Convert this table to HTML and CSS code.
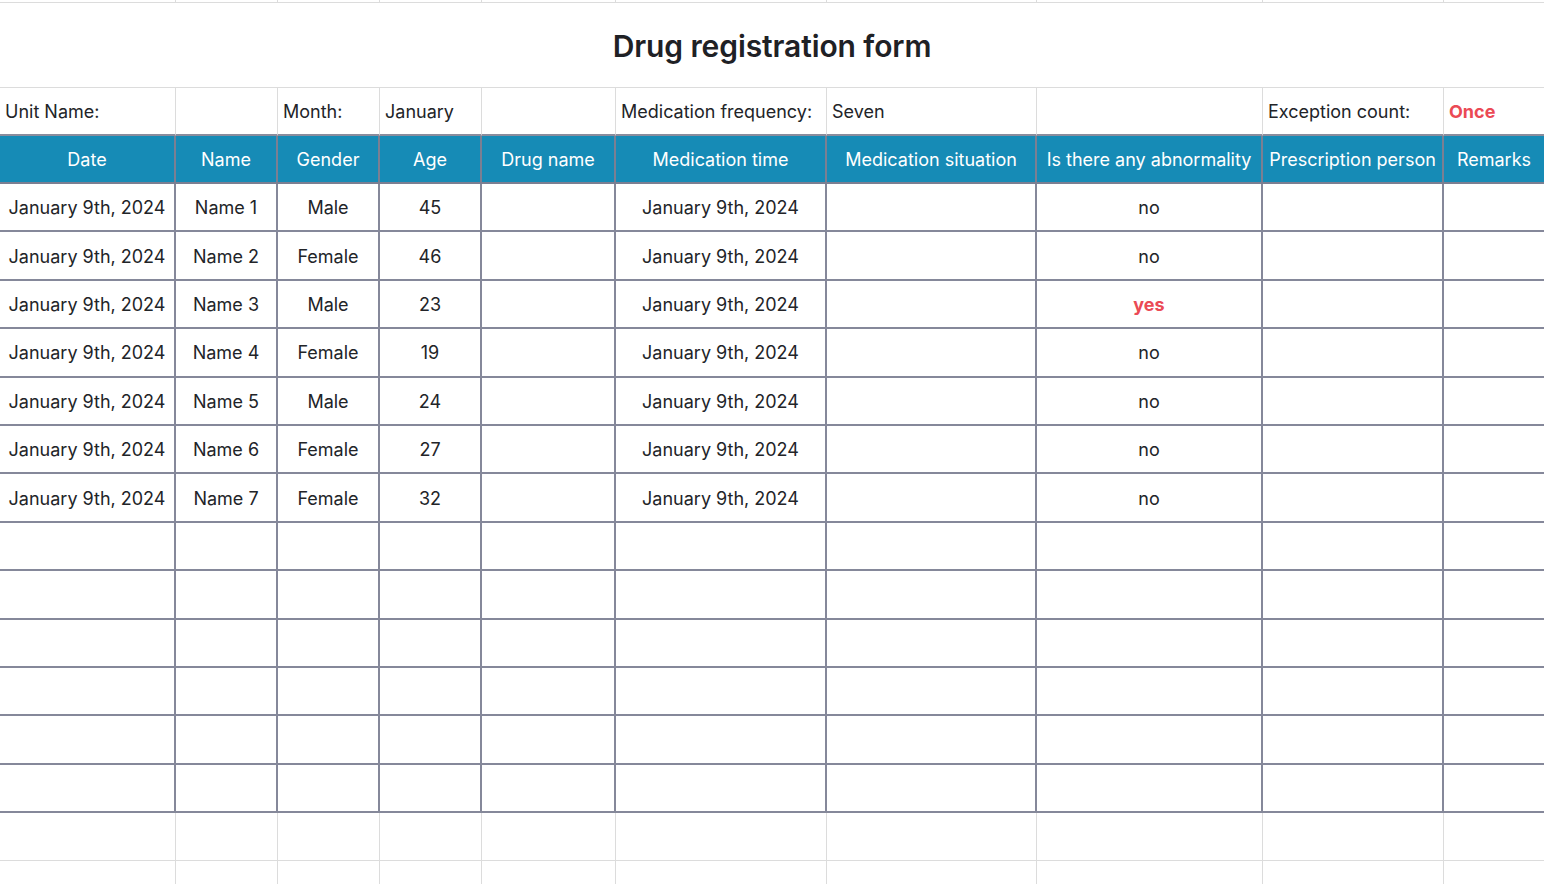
FILE: index.html
```html
<!DOCTYPE html>
<html lang="en">
<head>
<meta charset="utf-8">
<title>Drug registration form</title>
<link rel="stylesheet" href="styles.css">
</head>
<body>
<div class="sheet">
<table class="grid">
  <colgroup>
    <col style="width:176px"><col style="width:102px"><col style="width:102px"><col style="width:102px"><col style="width:134px"><col style="width:211px"><col style="width:210px"><col style="width:226px"><col style="width:181px"><col style="width:100px">
  </colgroup>
  <tr class="strip">
    <td></td><td></td><td></td><td></td><td></td><td></td><td></td><td></td><td></td><td></td>
  </tr>
  <tr class="title-row">
    <td colspan="10" class="title">Drug registration form</td>
  </tr>
  <tr class="info">
    <td>Unit Name:</td><td></td><td>Month:</td><td>January</td><td></td><td>Medication frequency:</td><td>Seven</td><td></td><td>Exception count:</td><td class="alert">Once</td>
  </tr>
  <tr class="head">
    <th>Date</th><th>Name</th><th>Gender</th><th>Age</th><th>Drug name</th><th>Medication time</th><th>Medication situation</th><th>Is there any abnormality</th><th>Prescription person</th><th>Remarks</th>
  </tr>
  <tr class="data"><td>January 9th, 2024</td><td>Name 1</td><td>Male</td><td>45</td><td></td><td>January 9th, 2024</td><td></td><td>no</td><td></td><td></td></tr>
  <tr class="data"><td>January 9th, 2024</td><td>Name 2</td><td>Female</td><td>46</td><td></td><td>January 9th, 2024</td><td></td><td>no</td><td></td><td></td></tr>
  <tr class="data"><td>January 9th, 2024</td><td>Name 3</td><td>Male</td><td>23</td><td></td><td>January 9th, 2024</td><td></td><td class="alert">yes</td><td></td><td></td></tr>
  <tr class="data"><td>January 9th, 2024</td><td>Name 4</td><td>Female</td><td>19</td><td></td><td>January 9th, 2024</td><td></td><td>no</td><td></td><td></td></tr>
  <tr class="data"><td>January 9th, 2024</td><td>Name 5</td><td>Male</td><td>24</td><td></td><td>January 9th, 2024</td><td></td><td>no</td><td></td><td></td></tr>
  <tr class="data"><td>January 9th, 2024</td><td>Name 6</td><td>Female</td><td>27</td><td></td><td>January 9th, 2024</td><td></td><td>no</td><td></td><td></td></tr>
  <tr class="data"><td>January 9th, 2024</td><td>Name 7</td><td>Female</td><td>32</td><td></td><td>January 9th, 2024</td><td></td><td>no</td><td></td><td></td></tr>
  <tr class="data"><td></td><td></td><td></td><td></td><td></td><td></td><td></td><td></td><td></td><td></td></tr>
  <tr class="data"><td></td><td></td><td></td><td></td><td></td><td></td><td></td><td></td><td></td><td></td></tr>
  <tr class="data"><td></td><td></td><td></td><td></td><td></td><td></td><td></td><td></td><td></td><td></td></tr>
  <tr class="data"><td></td><td></td><td></td><td></td><td></td><td></td><td></td><td></td><td></td><td></td></tr>
  <tr class="data"><td></td><td></td><td></td><td></td><td></td><td></td><td></td><td></td><td></td><td></td></tr>
  <tr class="data"><td></td><td></td><td></td><td></td><td></td><td></td><td></td><td></td><td></td><td></td></tr>
  <tr class="blank"><td></td><td></td><td></td><td></td><td></td><td></td><td></td><td></td><td></td><td></td></tr>
  <tr class="blank"><td></td><td></td><td></td><td></td><td></td><td></td><td></td><td></td><td></td><td></td></tr>
</table>
</div>
</body>
</html>
```

FILE: styles.css
```css
html, body {
  margin: 0;
  padding: 0;
  background: #ffffff;
}

body {
  font-family: Inter, "Noto Sans", "Liberation Sans", sans-serif;
  color: #222428;
  width: 1544px;
  height: 884px;
  overflow: hidden;
}

.sheet {
  width: 1544px;
  overflow: hidden;
}

.grid {
  table-layout: fixed;
  border-collapse: separate;
  border-spacing: 0;
  width: 1544px;
  font-size: 18px;
}

.grid td,
.grid th {
  padding: 0;
  box-sizing: border-box;
  border-right: 1px solid #dcdcdc;
  border-bottom: 1px solid #dcdcdc;
  white-space: nowrap;
  overflow: hidden;
  text-align: center;
  vertical-align: middle;
}

.grid td:last-child,
.grid th:last-child {
  border-right: none;
}

.strip {
  height: 3px;
}

.title-row {
  height: 85px;
}

.grid .title {
  font-size: 30px;
  font-weight: 600;
  letter-spacing: -0.1px;
  color: #1f2125;
  border-right: none;
  padding-top: 2px;
}

.info {
  height: 48px;
}

.grid .info td {
  text-align: left;
  padding-left: 5px;
  border-bottom: 2px solid #8a8c9c;
}

.head {
  height: 48px;
}

.grid .head th {
  background: #168bb6;
  color: #ffffff;
  font-weight: 400;
  border-right: 2px solid #7b7f92;
  border-bottom: 2px solid #7b7f92;
}

.data {
  height: 48.4px;
}

.grid .data td {
  border-right: 2px solid #85889a;
  border-bottom: 2px solid #85889a;
  padding-top: 1px;
}

.grid .data td:last-child,
.grid .head th:last-child {
  border-right: none;
}

.blank {
  height: 48.4px;
}

.grid .alert {
  color: #eb4a55;
  font-weight: 700;
}
```
